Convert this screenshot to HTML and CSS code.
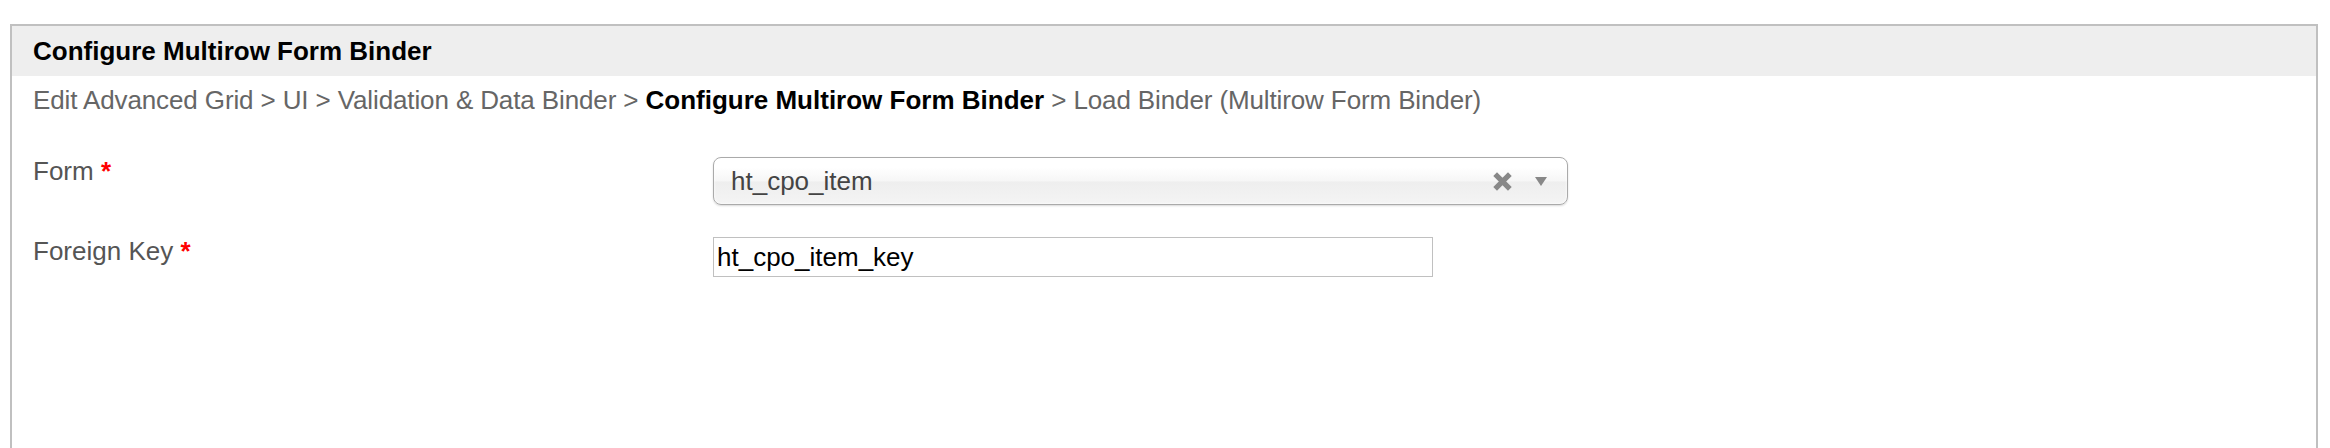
FILE: index.html
```html
<!DOCTYPE html>
<html lang="en">
<head>
    <meta charset="UTF-8">
    <title>Configure Multirow Form Binder</title>
    <link rel="stylesheet" href="styles.css">
</head>
<body>
    <div class="panel">
        <div class="panel-title">Configure Multirow Form Binder</div>
        <div class="panel-body">
            <div class="breadcrumb">Edit Advanced Grid &gt; UI &gt; Validation &amp; Data Binder &gt; <strong>Configure Multirow Form Binder</strong> &gt; Load Binder (Multirow Form Binder)</div>

            <div class="form-row">
                <label class="form-label">Form <span class="required">*</span></label>
                <div class="chosen-single">
                    <span class="chosen-value">ht_cpo_item</span>
                    <div class="chosen-icons">
                        <svg class="chosen-clear" width="21" height="21" viewBox="0 0 20 20">
                            <path d="M3 3 L17 17 M17 3 L3 17" stroke="#888" stroke-width="5" fill="none"/>
                        </svg>
                        <svg class="chosen-arrow" width="12" height="9" viewBox="0 0 12 9">
                            <polygon points="0,0 12,0 6,9" fill="#888"/>
                        </svg>
                    </div>
                </div>
            </div>

            <div class="form-row form-row-input">
                <label class="form-label">Foreign Key <span class="required">*</span></label>
                <input type="text" class="text-input" value="ht_cpo_item_key">
            </div>
        </div>
    </div>
</body>
</html>
```

FILE: styles.css
```css
* {
    box-sizing: border-box;
    margin: 0;
    padding: 0;
}

body {
    font-family: "Liberation Sans", Arial, sans-serif;
    font-size: 26px;
    background: #fff;
    overflow: hidden;
}

.panel {
    margin: 24px 12px 0 10px;
    min-height: 480px;
    border: 2px solid #c0c0c0;
    border-bottom: none;
}

.panel-title {
    height: 50px;
    line-height: 50px;
    padding-left: 21px;
    background: #eee;
    color: #000;
    font-weight: bold;
}

.panel-body {
    padding: 9px 21px;
}

.breadcrumb {
    line-height: 30px;
    color: #666;
    letter-spacing: -0.12px;
}

.breadcrumb strong {
    color: #000;
    letter-spacing: 0;
}

.form-row {
    display: grid;
    grid-template-columns: 680px 1fr;
    align-items: start;
    margin-top: 42px;
}

.form-row-input {
    margin-top: 32px;
}

.form-label {
    line-height: 28px;
    color: #555;
}

.required {
    color: #f00;
    font-weight: bold;
}

.chosen-single {
    width: 855px;
    height: 48px;
    display: flex;
    align-items: center;
    justify-content: space-between;
    padding: 0 20px 0 17px;
    border: 1px solid #aaa;
    border-radius: 8px;
    background: linear-gradient(#fff 20%, #f6f6f6 50%, #eee 52%, #f4f4f4 100%);
    box-shadow: inset 0 0 3px #fff, 0 1px 2px rgba(0,0,0,0.15);
    color: #444;
    line-height: 46px;
}

.chosen-icons {
    display: flex;
    align-items: center;
    gap: 22px;
}

.chosen-icons svg {
    display: block;
}

.text-input {
    width: 720px;
    height: 40px;
    padding: 0 3px;
    border: 1px solid #c0c0c0;
    border-radius: 0;
    font-family: inherit;
    font-size: 26px;
    color: #000;
    background: #fff;
    outline: none;
}
```
